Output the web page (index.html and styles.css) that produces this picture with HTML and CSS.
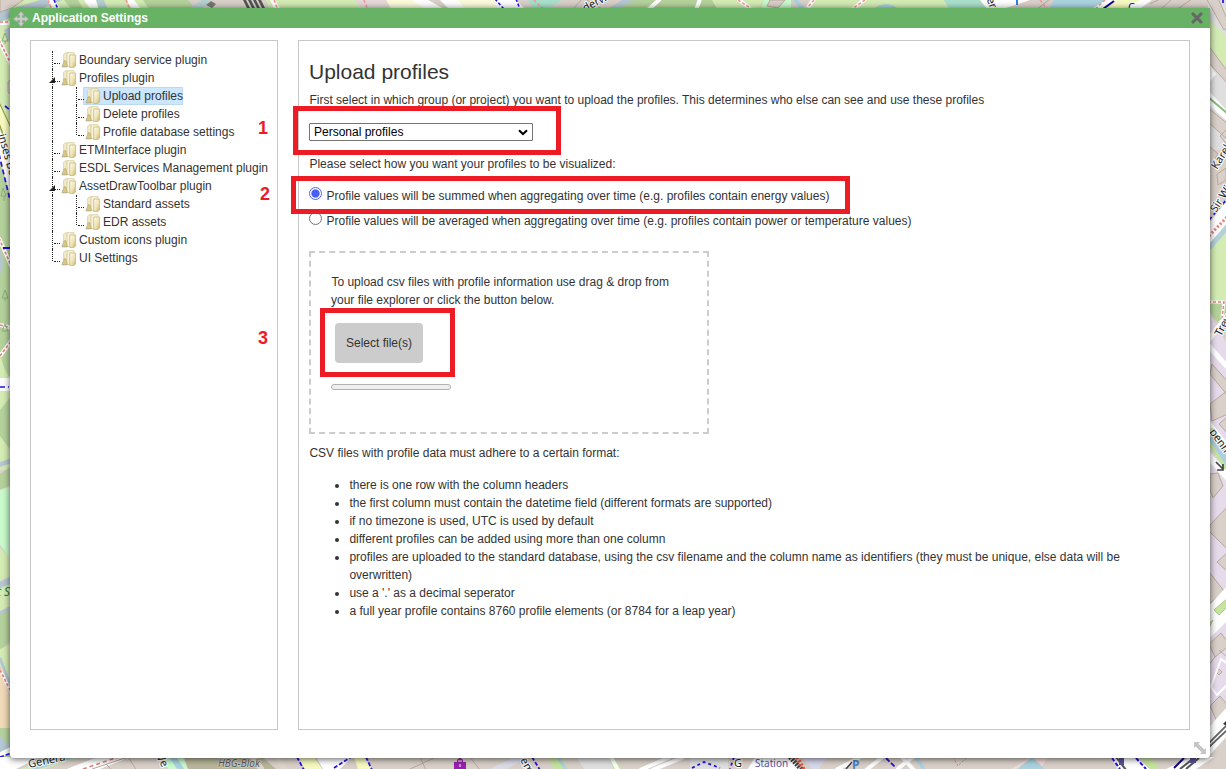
FILE: index.html
```html
<!DOCTYPE html>
<html lang="en">
<head>
<meta charset="utf-8">
<title>Application Settings</title>
<link rel="stylesheet" href="styles.css">
</head>
<body>
<svg class="map" width="1226" height="769" viewBox="0 0 1226 769" aria-hidden="true">
  <rect width="1226" height="769" fill="#d9d0c9"/>
  <!-- north edge -->
  <path fill="#d4ecb4" d="M0 0H180V12H0z"/>
  <path fill="#b5c7d3" d="M0 12L40 0H62L10 22H0z"/>
  <path fill="#d9d0c9" stroke="#b9a99c" d="M0-2H26L12 8L0 12z"/>
  <path fill="#fff" d="M47 0H54L62 10H54zM84 0H96L102 10H91zM126 0H134L142 10H133z"/>
  <path fill="#b5d29c" d="M64 0H78L84 10H72zM143 0H188L197 10H150z"/>
  <path fill="#b5d0d0" d="M96 0H104L108 10H99zM186 10L202 0H212L200 10z"/>
  <path fill="#d9d0c9" d="M210 0H250V10H204z"/>
  <path fill="#555" d="M243 0L248 10H251L246 0zM248 0L253 10H256L251 0zM253 0L258 10H261L256 0zM258 0L263 10H266L261 0z"/>
  <path fill="#d4ecb4" d="M266 0H355L366 10H270z"/>
  <path fill="#fff" d="M270 0H275L281 10H275zM410 0H428L446 10H424zM440 0H460L466 10H450zM490 0H516L526 10H496z"/>
  <path fill="#e4d8d8" d="M355 0H386L392 10H362z"/>
  <path fill="#fbfbdc" d="M386 0H412L426 10H392zM458 0H494L498 10H466z"/>
  <path fill="#aae0cb" d="M528 0H562L546 10H534z"/>
  <path fill="#d9d0c9" stroke="#b9a99c" d="M574 8L583-2L604 10"/>
  <path fill="#b5c7d3" d="M606 10L622 0H634L616 10z"/>
  <path fill="#b5d29c" d="M634 0H712L718 10H616z"/>
  <path fill="#d4ecb4" d="M712 0H764L758 10H718zM810 0H944L952 10H804z"/>
  <path fill="#c8facc" d="M764 0H791V10H760z"/>
  <path fill="#d9d0c9" stroke="#b9a99c" d="M770 0H785L778 8L767 6z"/>
  <path fill="#aad3df" d="M793 0L801 10H806L798 0zM872 10Q886-2 900 10zM1054 0H1108L1090 10H1048z"/>
  <path fill="#aae0cb" d="M944 0H980L987 10H950z"/>
  <path fill="#fff" d="M980 0H1030L1000 10H988zM1106 0H1118L1100 10H1090zM1138 0H1152L1138 10H1124z"/>
  <path fill="#f7fabf" d="M1118 0H1140L1122 10H1100z"/>
  <path fill="none" stroke="#b9a99c" d="M1160 10L1172-1M1176 10L1192-1M1150 4L1160-1M1036 10L1050-1"/>
  <path fill="none" stroke="#fff" stroke-width="4" d="M660-1L648 10M700-1L696 10M738-1L752 10M806 10L814-1M865-1L852 10"/>
  <path fill="none" stroke="#f39696" stroke-width="1.5" stroke-dasharray="3 2" d="M48 0L52 10M126 0L130 10M274 0L278 10M364 0L368 10M738 0L752 9M814 0L806 9M865 0L852 9M1040 0L1048 10M1105 0L1094 10M534 0L544 10"/>
  <path fill="none" stroke="#2412e8" stroke-width="1.6" stroke-dasharray="3 2" d="M54 0L58 9M495-1L504 9M516-1L520 9"/>
  <path stroke="#347de0" stroke-width="2" d="M1017 0V5"/>
  <path stroke="#140089" stroke-width="2" d="M1114 1L1103 9"/>
  <path fill="#777" d="M206 5l5-4 5 3-4 4z"/>
  <text class="street" transform="translate(585 12) rotate(-28)">derweg</text>
  <text class="street" transform="translate(984 -7) rotate(68)">der</text>
  <text class="street" x="1128" y="11">C</text>
  <!-- west edge -->
  <path fill="#b5d29c" d="M0 16H12V410H0z"/>
  <path fill="#d4ecb4" d="M0 18L10 14V140L0 126zM0 330V350Q2 370 12 380V440L0 400z"/>
  <path fill="#b5c7d3" d="M0 14L12 9V17L0 22zM4 30L12 26V48zM0 250Q6 264 0 275z"/>
  <path fill="#f7fabf" stroke="#8a922b" d="M-2 100L12 130V160L-2 120z"/>
  <path fill="#fff" d="M0 130L12 158V202L0 160z"/>
  <path fill="none" stroke="#fff" stroke-width="4" d="M-1 40L11 64M0 23H12M-1 238L12 268M0 325L12 328M0 356L12 340M-1 440L12 456M0 404L12 392"/>
  <path fill="none" stroke="#e68078" stroke-width="1.6" stroke-dasharray="3 2" d="M0 22H12M-1 40L11 64M-1 238L12 268M0 325L12 328M0 356L12 340M0 404L12 392M-1 440L12 456"/>
  <path fill="#d9d0c9" stroke="#b9a99c" d="M12 78L8 82V92L12 96"/>
  <path fill="none" stroke="#2412e8" stroke-width="1.7" stroke-dasharray="5 3" d="M5 106L11 111M-1 154L10 200M0 386H8M2 458L7 456"/>
  <path stroke="#2412e8" stroke-width="2" d="M3 248H11"/>
  <path fill="none" stroke="#8eae7c" d="M5 33l-3 8h6zM5 41v3M3 188l-2 8h5zM4 196v5M5 290l-3 8h6zM5 298v3M5 324l-3 7h6z"/>
  <text class="street" transform="translate(-2 135) rotate(74)">inses Bea</text>
  <path fill="#d4ecb4" d="M0 376H12V470H0z"/>
  <path fill="#b5d29c" d="M0 410L12 395V452L0 436zM0 474L12 466V484L0 490zM0 612L12 606V640L0 650z"/>
  <path fill="#fff" d="M0 378H10V391H0z"/>
  <path fill="none" stroke="#2412e8" stroke-width="1.7" stroke-dasharray="5 3" d="M0 387H9"/>
  <path fill="#b5c7d3" d="M0 462L12 458V463L0 467zM0 582L12 576V583L0 588zM0 611L12 605V609L0 615z"/>
  <path fill="#c8facc" d="M0 490L12 486V560L0 545z"/>
  <path fill="#d4ecb4" d="M0 548L12 558V575L0 581zM0 588L12 584V605L0 611zM0 649L12 644V690L0 665z"/>
  <text class="nature" x="-3" y="596">t S</text>
  <path fill="none" stroke="#b5c7d3" stroke-width="3" d="M0 658L12 690"/>
  <path fill="#f1dab8" d="M0 668L12 704V730L0 728z"/>
  <path fill="none" stroke="#fff" stroke-width="3" d="M0 670L12 694"/>
  <path fill="none" stroke="#e68078" stroke-width="1.7" stroke-dasharray="3 2" d="M0 670L12 694"/>
  <path fill="#b5d29c" d="M0 728H12V758H0z"/>
  <path fill="#b5c7d3" d="M0 736L9 745V752H0z"/>
  <path stroke="#fff" stroke-width="5" d="M0 755L14 748"/>
  <path stroke="#2412e8" stroke-width="1.6" stroke-dasharray="4 2" d="M0 757L12 753"/>
  <!-- east edge -->
  <path fill="#dfdfdf" d="M1208 0H1226V150H1208z"/>
  <path fill="#d4ecb4" d="M1208 18L1226 36V70L1208 46zM1208 250L1226 230V300L1208 305z"/>
  <g fill="#d9d0c9" stroke="#b9a99c">
    <path d="M1206-2H1218L1230 26L1224 30zM1208 45L1228 72V84L1208 62zM1208 108L1228 124V140L1208 122zM1208 145L1218 154L1210 166M1220 136l8-8v18zM1217 174l9-6v12l-8 5z"/>
  </g>
  <path fill="#fff" d="M1208 62L1216 74L1208 84zM1208 90L1228 112V122L1208 104zM1208 225L1228 198V226L1208 247z"/>
  <path stroke="#88b978" stroke-width="2" d="M1208 97L1228 114"/>
  <path stroke="#2412e8" stroke-width="1.7" stroke-dasharray="4 3" d="M1209 220L1228 198M1223-1V6"/>
  <path stroke="#e68078" stroke-width="3" stroke-dasharray="2 2" d="M1209 236L1228 216"/>
  <path stroke="#b5d0d9" stroke-width="5" d="M1209 248L1228 226"/>
  <text class="street" transform="translate(1217 170) rotate(-58)">Karel D</text>
  <text class="street" transform="translate(1216 213) rotate(-58)">Sir Win</text>
  <path fill="#b5d29c" d="M1208 303H1228V314L1217 322L1208 310z"/>
  <path fill="none" stroke="#fff" stroke-width="3" d="M1208 302H1224L1222 318"/>
  <path fill="none" stroke="#e68078" stroke-width="1.5" stroke-dasharray="3 2" d="M1208 302H1224L1222 318"/>
  <path fill="#e6dbea" d="M1208 310L1228 346V600L1208 640z"/>
  <path stroke="#fff" stroke-width="5" d="M1207 342L1230 312M1207 344L1230 370"/>
  <text class="street" transform="translate(1221 337) rotate(-62)">Trev</text>
  <g fill="#d9d0c9" stroke="#b9a99c">
    <path d="M1212 364L1228 382V396L1210 374zM1210 404L1228 390V414L1212 421zM1228 416l-9 8 9 10M1210 474L1218 473L1223 486L1213 498L1210 490zM1210 525L1228 506V550L1209 531zM1228 552L1217 562L1228 572M1209 572L1225 592L1209 604z"/>
  </g>
  <path stroke="#fff" stroke-width="7" d="M1208 424L1230 452M1208 455L1230 480"/>
  <path stroke="#c5e59f" stroke-width="13" d="M1207 431L1230 466"/>
  <path stroke="#b0cede" stroke-width="6" d="M1207 431L1230 466"/>
  <text class="street" transform="translate(1209 432) rotate(54)">penh</text>
  <path fill="none" stroke="#444" stroke-width="1.7" d="M1216 462L1223 469M1223 464V470H1217"/>
  <path fill="#fff" d="M1208 607L1228 585V620L1208 645z"/>
  <path fill="#c5e59f" stroke="#a9cb86" d="M1214 610L1228 598V606L1219 615zM1208 624L1213 620L1208 630z"/>
  <path fill="#e6dbea" d="M1208 640L1228 620V710L1208 726z"/>
  <g fill="#d9d0c9" stroke="#b9a99c">
    <path d="M1209 644L1221 633L1230 645L1215 657zM1215 657L1208 666M1219 650L1228 658M1216 672l3-3 3 3-3 3zM1210 706L1220 696L1230 708L1217 722z"/>
  </g>
  <path fill="none" stroke="#fff" stroke-width="2" d="M1211 687L1221 659L1228 664M1211 687L1217 695L1228 684"/>
  <path fill="#fff" d="M1208 728L1228 706V735L1208 757z"/>
  <path fill="none" stroke="#666" stroke-width="1.8" d="M1208 744L1228 724M1208 748L1228 729"/>
  <path fill="#333" d="M1223 724l4-4v6z"/>
  <!-- south edge -->
  <path fill="#fff" d="M0 757H40L16 769H0z"/>
  <path fill="#d4ecb4" d="M20 769L60 757H80L44 769z"/>
  <path stroke="#aad3df" stroke-width="4" d="M32 769L74 756"/>
  <path stroke="#fff" stroke-width="12" d="M70 774L122 754"/>
  <path stroke="#e68078" stroke-width="1.6" stroke-dasharray="4 3" d="M83 769L118 757"/>
  <path fill="none" stroke="#b9a99c" d="M92 769L128 757L136 769M106 764L112 770"/>
  <path fill="#c8facc" d="M160 756H182L188 769H168z"/>
  <path stroke="#aad3df" stroke-width="6" d="M172 756L182 771"/>
  <path fill="#b7b69a" d="M184 757H262L276 769H188z"/>
  <path stroke="#ddd5c7" stroke-width="6" d="M252 756L262 770M276 756L285 770"/>
  <path fill="#f7fabf" d="M298 757H314L322 769H305zM354 757H364L372 769H358z"/>
  <path fill="#fff" d="M316 757H352L340 769H323z"/>
  <path stroke="#2412e8" stroke-width="1.8" stroke-dasharray="4 2" d="M297 757L304 770M334 768L351 757M366 757L372 770M532 757L540 770"/>
  <path fill="none" stroke="#b9a99c" d="M408 770L436 757M420 757L426 770M470 757L480 770"/>
  <path stroke="#dcdce8" stroke-width="7" d="M492 772L524 756"/>
  <path fill="#9a1fb0" d="M454 762h3v-2q3-4 6 0v2h3v7h-12z"/>
  <path stroke="#fff" d="M458 761h4M460 764v3"/>
  <path fill="#c5e59f" d="M548 757H560L568 769H554zM602 757H614L622 769H606z"/>
  <path stroke="#aad3df" stroke-width="3" d="M558 757L566 770"/>
  <path fill="#dfdfdf" d="M576 757H608L614 769H584zM690 757H728V769H690z"/>
  <path stroke="#fff" stroke-width="4" d="M611 757L618 770M640 770L670 757M652 770L684 757"/>
  <path fill="none" stroke="#2412e8" stroke-width="1.8" stroke-dasharray="3 3" d="M692 768L704 762L720 768M734 757L730 769"/>
  <path fill="#fff" d="M755 757H790L800 769H748z"/>
  <path stroke="#444" stroke-width="5" stroke-dasharray="2 1" d="M790 757L802 770"/>
  <path stroke="#e65040" stroke-width="4" stroke-dasharray="2 2" d="M797 757L804 770"/>
  <path fill="#d8d8ec" d="M802 757H828L818 769H812z"/>
  <path stroke="#fff" stroke-width="4" d="M836 770L862 756M866 770L884 756M896 770L914 756M902 757L914 770"/>
  <path stroke="#2412e8" stroke-width="1.8" stroke-dasharray="5 2" d="M886 758L896 768"/>
  <path stroke="#444" stroke-width="1.5" d="M846 769L852 762"/>
  <path fill="#f1d9d9" d="M1010 770L1030 757H1048L1040 770z"/>
  <path fill="#aad3df" d="M1016 770L1032 757L1046 770zM914 757L922 770H926L918 757z"/>
  <path fill="none" stroke="#e68078" stroke-dasharray="2 2" d="M953 757L958 766L966 758"/>
  <path fill="#fff" d="M1110 757H1136L1150 769H1118zM1166 769L1192 757H1214L1196 769z"/>
  <path stroke="#c5e59f" stroke-width="8" d="M1144 756L1156 770"/>
  <path fill="none" stroke="#2412e8" stroke-width="2" stroke-dasharray="4 2" d="M1112 758L1120 769M1136 758L1146 769"/>
  <path fill="none" stroke="#555" stroke-width="2" d="M1116 757L1126 770M1180 769L1194 758M1186 769L1199 758"/>
  <path stroke="#140089" stroke-width="2" d="M1184 758L1174 768"/>
  <path fill="#5a549c" d="M1119 758h5v7h-5zM1190 758h6v5h-6z"/>
  <text class="street" transform="translate(29 768) rotate(-12)">Genera</text>
  <text class="street" transform="translate(156 757) rotate(60)">Ve</text>
  <text class="block" x="218" y="767">HBG-Blok</text>
  <text class="street" transform="translate(520 760) rotate(62)">em</text>
  <text class="street" x="734" y="767">G</text>
  <text class="station" x="755" y="767">Station</text>
  <text class="parking" x="852" y="769">P</text>
</svg>

<svg class="defs" width="0" height="0" aria-hidden="true">
  <defs>
    <linearGradient id="paper" x1="0" y1="0" x2="1" y2="1">
      <stop offset="0" stop-color="#fffdf0"/>
      <stop offset=".55" stop-color="#eee4b6"/>
      <stop offset="1" stop-color="#c4b069"/>
    </linearGradient>
    <symbol id="folder" viewBox="0 0 16 16">
      <path d="M2.5 2.5L4 .8H7.5V13L2.5 10z" fill="#f0e9c8" stroke="#ddd4a8" stroke-width=".8"/>
      <path d="M6 1.5L7.5 .7H13V14.5H6z" fill="#f8f3da" stroke="#d6ca94" stroke-width=".8"/>
      <path d="M8.7 3H14.6V14L12.8 15.5H8.7z" fill="url(#paper)" stroke="#c9b978" stroke-width=".8"/>
      <path d="M1 14.5L2.6 10.5Q2.5 8.5 4 8.5T5.2 10.5L6.3 14.5z" fill="#d8c884" stroke="#b3a263" stroke-width=".6"/>
      <path d="M.5 15H6" stroke="#999" stroke-opacity=".45"/>
    </symbol>
  </defs>
</svg>

<main class="window">
  <header class="titlebar">
    <svg class="move" width="16" height="16" viewBox="0 0 16 16"><path fill="#c8cbc8" stroke="#95a595" stroke-width=".5" d="M8 .3L11.3 4.2H9.4V6.6H11.8V4.7L15.7 8L11.8 11.3V9.4H9.4V11.8H11.3L8 15.7L4.7 11.8H6.6V9.4H4.2V11.3L.3 8L4.2 4.7V6.6H6.6V4.2H4.7z"/></svg>
    <h1 class="title">Application Settings</h1>
    <svg class="close" width="12" height="12" viewBox="0 0 12 12"><path d="M2 2L10 10M10 2L2 10" stroke="#666" stroke-width="3.1" stroke-linecap="round"/></svg>
  </header>

  <div class="body">
    <nav class="panel tree">
      <div class="node"><i class="guide branch"></i><svg class="folder"><use href="#folder"/></svg><span>Boundary service plugin</span></div>
      <div class="node open"><i class="guide branch"></i><svg class="folder"><use href="#folder"/></svg><span>Profiles plugin</span></div>
      <div class="node"><i class="guide"></i><i class="guide branch"></i><span class="selected"><svg class="folder"><use href="#folder"/></svg><span>Upload profiles</span></span></div>
      <div class="node"><i class="guide"></i><i class="guide branch"></i><svg class="folder"><use href="#folder"/></svg><span>Delete profiles</span></div>
      <div class="node"><i class="guide"></i><i class="guide branch last"></i><svg class="folder"><use href="#folder"/></svg><span>Profile database settings</span></div>
      <div class="node"><i class="guide branch"></i><svg class="folder"><use href="#folder"/></svg><span>ETMInterface plugin</span></div>
      <div class="node"><i class="guide branch"></i><svg class="folder"><use href="#folder"/></svg><span>ESDL Services Management plugin</span></div>
      <div class="node open"><i class="guide branch"></i><svg class="folder"><use href="#folder"/></svg><span>AssetDrawToolbar plugin</span></div>
      <div class="node"><i class="guide"></i><i class="guide branch"></i><svg class="folder"><use href="#folder"/></svg><span>Standard assets</span></div>
      <div class="node"><i class="guide"></i><i class="guide branch last"></i><svg class="folder"><use href="#folder"/></svg><span>EDR assets</span></div>
      <div class="node"><i class="guide branch"></i><svg class="folder"><use href="#folder"/></svg><span>Custom icons plugin</span></div>
      <div class="node"><i class="guide branch last"></i><svg class="folder"><use href="#folder"/></svg><span>UI Settings</span></div>
    </nav>

    <section class="panel content">
      <h2 class="heading">Upload profiles</h2>
      <p class="line">First select in which group (or project) you want to upload the profiles. This determines who else can see and use these profiles</p>
      <div class="select"><span>Personal profiles</span><svg width="10" height="7" viewBox="0 0 10 7"><path d="M1 1.2L5 5L9 1.2" fill="none" stroke="#000" stroke-width="2"/></svg></div>
      <p class="line">Please select how you want your profiles to be visualized:</p>
      <div class="options">
        <div class="option"><i class="radio checked"></i><span>Profile values will be summed when aggregating over time (e.g. profiles contain energy values)</span></div>
        <div class="option"><i class="radio"></i><span>Profile values will be averaged when aggregating over time (e.g. profiles contain power or temperature values)</span></div>
      </div>
      <div class="dropzone">
        <p class="line">To upload csv files with profile information use drag &amp; drop from<br>your file explorer or click the button below.</p>
        <div class="button">Select file(s)</div>
        <div class="progress"></div>
      </div>
      <p class="line">CSV files with profile data must adhere to a certain format:</p>
      <ul class="rules">
        <li>there is one row with the column headers</li>
        <li>the first column must contain the datetime field (different formats are supported)</li>
        <li>if no timezone is used, UTC is used by default</li>
        <li>different profiles can be added using more than one column</li>
        <li>profiles are uploaded to the standard database, using the csv filename and the column name as identifiers (they must be unique, else data will be<br>overwritten)</li>
        <li>use a '.' as a decimal seperator</li>
        <li>a full year profile contains 8760 profile elements (or 8784 for a leap year)</li>
      </ul>
    </section>
  </div>
  <svg class="resize" width="12" height="12" viewBox="0 0 12 12"><path fill="#c6c6c6" d="M0 0H6L4.4 1.7L10.3 7.6L12 6V12H6L7.6 10.3L1.7 4.4L0 6z"/></svg>
</main>

<div class="mark mark-group"></div>
<div class="mark mark-sum"></div>
<div class="mark mark-files"></div>
<span class="step step-1">1</span>
<span class="step step-2">2</span>
<span class="step step-3">3</span>
</body>
</html>
```

FILE: styles.css
```css
* { box-sizing: border-box; }

body {
  margin: 0;
  height: 769px;
  overflow: hidden;
  position: relative;
  padding: 8px 16px 0 10px;
  font: 12px/18px "Liberation Sans", Arial, sans-serif;
  color: #333;
}

.map { position: absolute; top: 0; left: 0; }
.defs { position: absolute; }
.street { font: 11px "Noto Sans", sans-serif; fill: #222; stroke: #fff; stroke-width: 2px; paint-order: stroke; }
.nature { font: italic 12px "Noto Sans", sans-serif; fill: #2d7a2d; }
.block { font: italic 10px "Noto Sans", sans-serif; fill: #555; stroke: #ddd; stroke-width: 1px; paint-order: stroke; }
.station { font: 10px "Noto Sans", sans-serif; fill: #5a55a8; }
.parking { font: bold 12px "Noto Sans", sans-serif; fill: #4684d0; }

.window {
  position: relative;
  height: 750px;
  background: #fff;
  border-radius: 0 0 4px 4px;
  box-shadow: 0 1px 7px rgba(0, 0, 0, .65);
}

.titlebar {
  display: flex;
  align-items: center;
  height: 20px;
  padding: 0 7px 0 3px;
  background: #68b266;
}
.title { flex: 1; margin: 0 0 0 3px; font-size: 12px; line-height: 20px; color: #fff; }
.move { margin-top: 1px; }

.body { display: flex; gap: 20px; padding: 12px 20px 0; }
.panel { height: 690px; border: 1px solid #c8c8c8; }

.tree { width: 248px; padding: 10px 0 0 21px; white-space: nowrap; }
.node { position: relative; display: flex; height: 18px; }
.guide { position: relative; width: 24px; height: 18px; }
.guide::before { content: ""; position: absolute; left: 0; top: 0; height: 18px; border-left: 1px dotted #222; }
.guide.last::before { height: 12px; }
.branch { width: 9px; }
.branch::after { content: ""; position: absolute; left: 2px; top: 12px; width: 6px; border-top: 1px dotted #222; }
.open::after {
  content: "";
  position: absolute;
  left: -3px;
  top: 8px;
  border-style: solid;
  border-width: 0 0 6px 6px;
  border-color: transparent transparent #222 transparent;
}
.folder { width: 16px; height: 16px; margin: 1px 2px 0 0; }
.selected { display: flex; height: 18px; margin-left: -2px; padding-left: 2px; background: #cce6fd; box-shadow: inset 0 0 0 1px #bcd9f2; border-radius: 1px; }

.content { width: 892px; padding: 19px 10px 0; }
.heading { margin: 0 0 7px; font-size: 21px; font-weight: 400; line-height: 24px; }
.line { margin: 0; text-indent: .4px; }
.select {
  display: flex;
  align-items: center;
  justify-content: space-between;
  width: 224px;
  height: 18px;
  margin: 14px 0;
  padding: 0 4px;
  border: 1px solid #767676;
  border-radius: 1px;
  color: #000;
}
.options { margin-top: 11px; }
.option { display: flex; gap: 4.5px; height: 25px; padding-top: 3px; }
.radio { width: 13px; height: 13px; border: 1px solid #767676; border-radius: 50%; background: #fff; }
.checked { border-color: #4f62f0; background: radial-gradient(circle, #4a60f6 3.7px, #fff 4.6px); }

.dropzone { width: 400px; height: 183px; margin: 17px 0 10px; padding: 20px; border: 2px dashed #ccc; }
.button { width: 88px; height: 40px; margin: 14px 0 0 4px; border-radius: 4px; background: #ccc; text-align: center; line-height: 40px; }
.progress { width: 120px; height: 6px; margin-top: 21px; border: 1px solid #b2b2b2; border-radius: 3px; background: #efefef; }

.rules { margin: 14px 0 0; padding-left: 40.4px; white-space: nowrap; }

.resize { position: absolute; right: 4px; bottom: 4px; }

.mark { position: absolute; border: 5px solid #ed1c24; }
.mark-group { left: 293px; top: 106px; width: 268px; height: 49px; }
.mark-sum { left: 291px; top: 176px; width: 559px; height: 38px; }
.mark-files { left: 320px; top: 308px; width: 135px; height: 69px; }
.step { position: absolute; font-size: 18px; font-weight: 700; line-height: 20px; color: #ed1c24; }
.step-1 { left: 258px; top: 118px; }
.step-2 { left: 260px; top: 184px; }
.step-3 { left: 258px; top: 328px; }
```
